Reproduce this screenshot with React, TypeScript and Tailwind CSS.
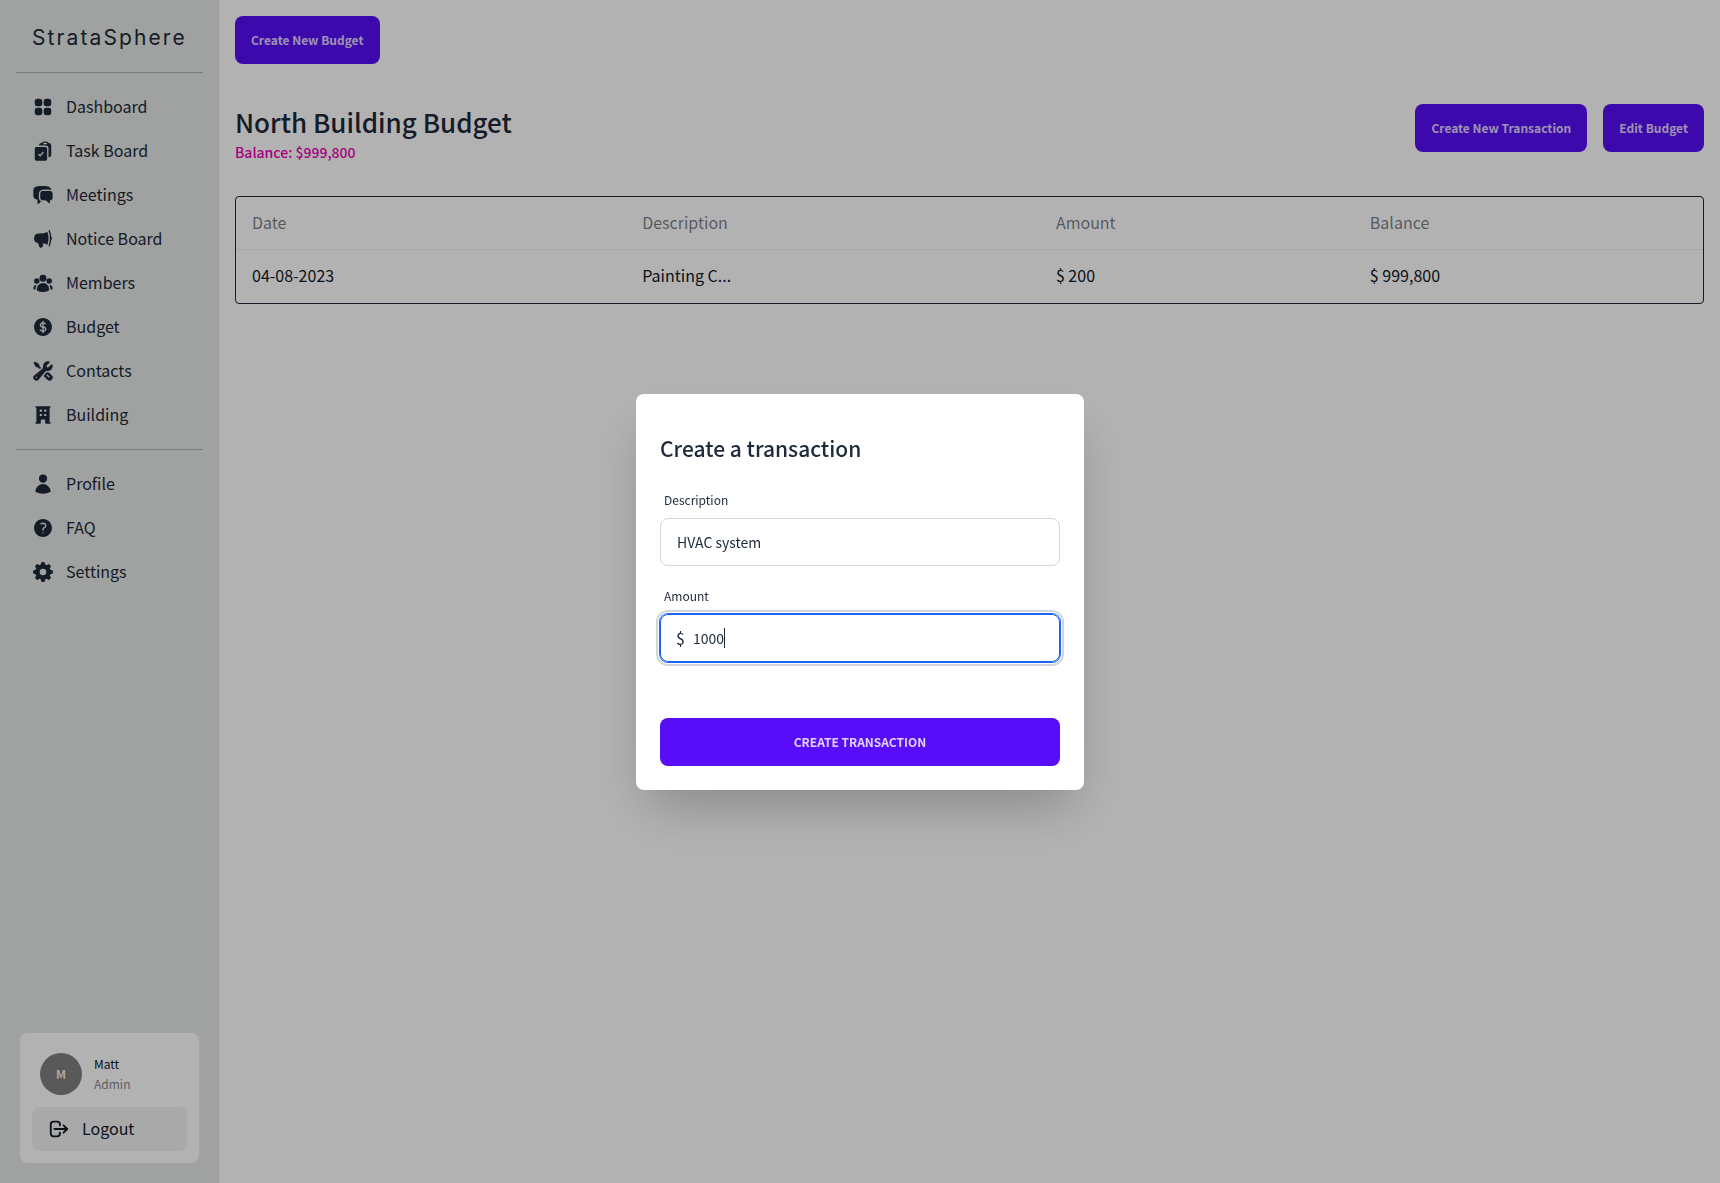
import type { ComponentType, ReactNode } from "react";
import { HiOutlineLogout } from "react-icons/hi";
import {
  HiChatBubbleLeftRight,
  HiClipboardDocumentCheck,
  HiCurrencyDollar,
  HiMegaphone,
  HiMiniBuildingOffice,
  HiMiniCog8Tooth,
  HiQuestionMarkCircle,
  HiSquares2X2,
  HiUser,
  HiUserGroup,
  HiWrenchScrewdriver,
} from "react-icons/hi2";

type NavLink = [label: string, icon: ComponentType<{ className?: string }>];

const mainLinks: NavLink[] = [
  ["Dashboard", HiSquares2X2],
  ["Task Board", HiClipboardDocumentCheck],
  ["Meetings", HiChatBubbleLeftRight],
  ["Notice Board", HiMegaphone],
  ["Members", HiUserGroup],
  ["Budget", HiCurrencyDollar],
  ["Contacts", HiWrenchScrewdriver],
  ["Building", HiMiniBuildingOffice],
];

const accountLinks: NavLink[] = [
  ["Profile", HiUser],
  ["FAQ", HiQuestionMarkCircle],
  ["Settings", HiMiniCog8Tooth],
];

const transactions = [
  { date: "04-08-2023", description: "Painting C...", amount: "$ 200", balance: "$ 999,800" },
];

function NavList({ links }: { links: NavLink[] }) {
  return (
    <ul>
      {links.map(([label, LinkIcon]) => (
        <li key={label}>
          <a href="#" className="flex h-11 items-center gap-3 rounded-lg px-4 text-base">
            <LinkIcon className="size-[22px]" />
            <span className="pb-0.5">{label}</span>
          </a>
        </li>
      ))}
    </ul>
  );
}

function Button({ children, className = "" }: { children: ReactNode; className?: string }) {
  return (
    <button
      type="button"
      className={`h-12 rounded-lg bg-[#570df8] px-4 text-xs font-bold text-[#e0d2fe] ${className}`}
    >
      {children}
    </button>
  );
}

function Sidebar() {
  return (
    <aside className="flex w-[219px] shrink-0 flex-col bg-[#e4e8e5]">
      <div className="grow px-4">
        <h1 className="flex h-[72px] items-center px-4 pt-1 font-['Inter',sans-serif] text-[21px] tracking-widest">
          StrataSphere
        </h1>
        <nav>
          <hr className="mb-3 border-[#b0b2b2]" />
          <NavList links={mainLinks} />
          <hr className="my-3 border-[#b0b2b2]" />
          <NavList links={accountLinks} />
        </nav>
      </div>
      <div className="m-5 rounded-lg bg-white p-3 text-gray-900">
        <div className="mb-1 flex items-center gap-3 p-2">
          <div className="flex size-[42px] items-center justify-center rounded-full bg-[#808080] text-xs font-medium text-white">
            M
          </div>
          <div className="text-xs/5">
            <p>Matt</p>
            <p className="text-gray-800/60">Admin</p>
          </div>
        </div>
        <button type="button" className="flex h-11 w-full items-center gap-3 rounded-lg bg-[#f2f2f2] px-4 text-base">
          <HiOutlineLogout className="size-[22px]" />
          <span className="pb-0.5">Logout</span>
        </button>
      </div>
    </aside>
  );
}

const headCell = "h-[53px] border-b border-[#f0f0f0] px-4 pb-0.5 font-normal";
const bodyCell = "h-[53px] px-4 pb-1";

function BudgetTable() {
  return (
    <div className="mt-8 rounded border border-gray-800">
      <table className="w-full table-fixed border-separate border-spacing-0 text-left text-base">
        <thead>
          <tr className="text-gray-800/60">
            <th scope="col" className={`w-[26.6%] ${headCell}`}>Date</th>
            <th scope="col" className={`w-[28.2%] ${headCell}`}>Description</th>
            <th scope="col" className={`w-[21.4%] ${headCell}`}>Amount</th>
            <th scope="col" className={headCell}>Balance</th>
          </tr>
        </thead>
        <tbody className="text-gray-900">
          {transactions.map((row) => (
            <tr key={row.date}>
              <td className={bodyCell}>{row.date}</td>
              <td className={bodyCell}>{row.description}</td>
              <td className={bodyCell}>{row.amount}</td>
              <td className={bodyCell}>{row.balance}</td>
            </tr>
          ))}
        </tbody>
      </table>
    </div>
  );
}

function TransactionDialog() {
  return (
    <div className="fixed inset-0 flex items-center justify-center bg-black/30">
      <form
        role="dialog"
        aria-labelledby="dialog-title"
        className="w-full max-w-md rounded-lg bg-white p-6 shadow-2xl"
      >
        <h2 id="dialog-title" className="mt-3.5 mb-4.5 text-[21px] leading-8 font-medium">
          Create a transaction
        </h2>
        <label htmlFor="description" className="block px-1 py-2 text-xs/5">
          Description
        </label>
        <input
          id="description"
          type="text"
          defaultValue="HVAC system"
          className="mb-3 h-12 w-full rounded-lg border border-gray-300 px-4 text-sm"
        />
        <label htmlFor="amount" className="block px-1 py-2 text-xs/5">
          Amount
        </label>
        <div className="relative mb-14">
          <span className="absolute inset-y-0 left-4 flex items-center text-base">$</span>
          <input
            id="amount"
            type="text"
            inputMode="decimal"
            defaultValue="1000"
            className="block h-12 w-full rounded-lg border border-[#1c64f2] pr-4 pl-8 text-sm caret-transparent ring-1 ring-[#1c64f2] outline-2 outline-offset-2 outline-gray-300"
          />
          <span aria-hidden="true" className="absolute top-3.5 left-16 h-5 w-px bg-gray-800" />
        </div>
        <Button className="w-full uppercase">Create transaction</Button>
      </form>
    </div>
  );
}

export default function App() {
  return (
    <div className="flex min-h-screen bg-white font-['Noto_Sans_CJK_SC',sans-serif] text-gray-800">
      <Sidebar />
      <main className="grow p-4">
        <Button>Create New Budget</Button>
        <div className="mt-10 flex items-start justify-between">
          <div>
            <h2 className="text-[26px] leading-9 font-medium">North Building Budget</h2>
            <p className="text-sm leading-6 font-medium text-[#f000b8]">Balance: $999,800</p>
          </div>
          <div className="flex gap-4">
            <Button>Create New Transaction</Button>
            <Button>Edit Budget</Button>
          </div>
        </div>
        <BudgetTable />
      </main>
      <TransactionDialog />
    </div>
  );
}
